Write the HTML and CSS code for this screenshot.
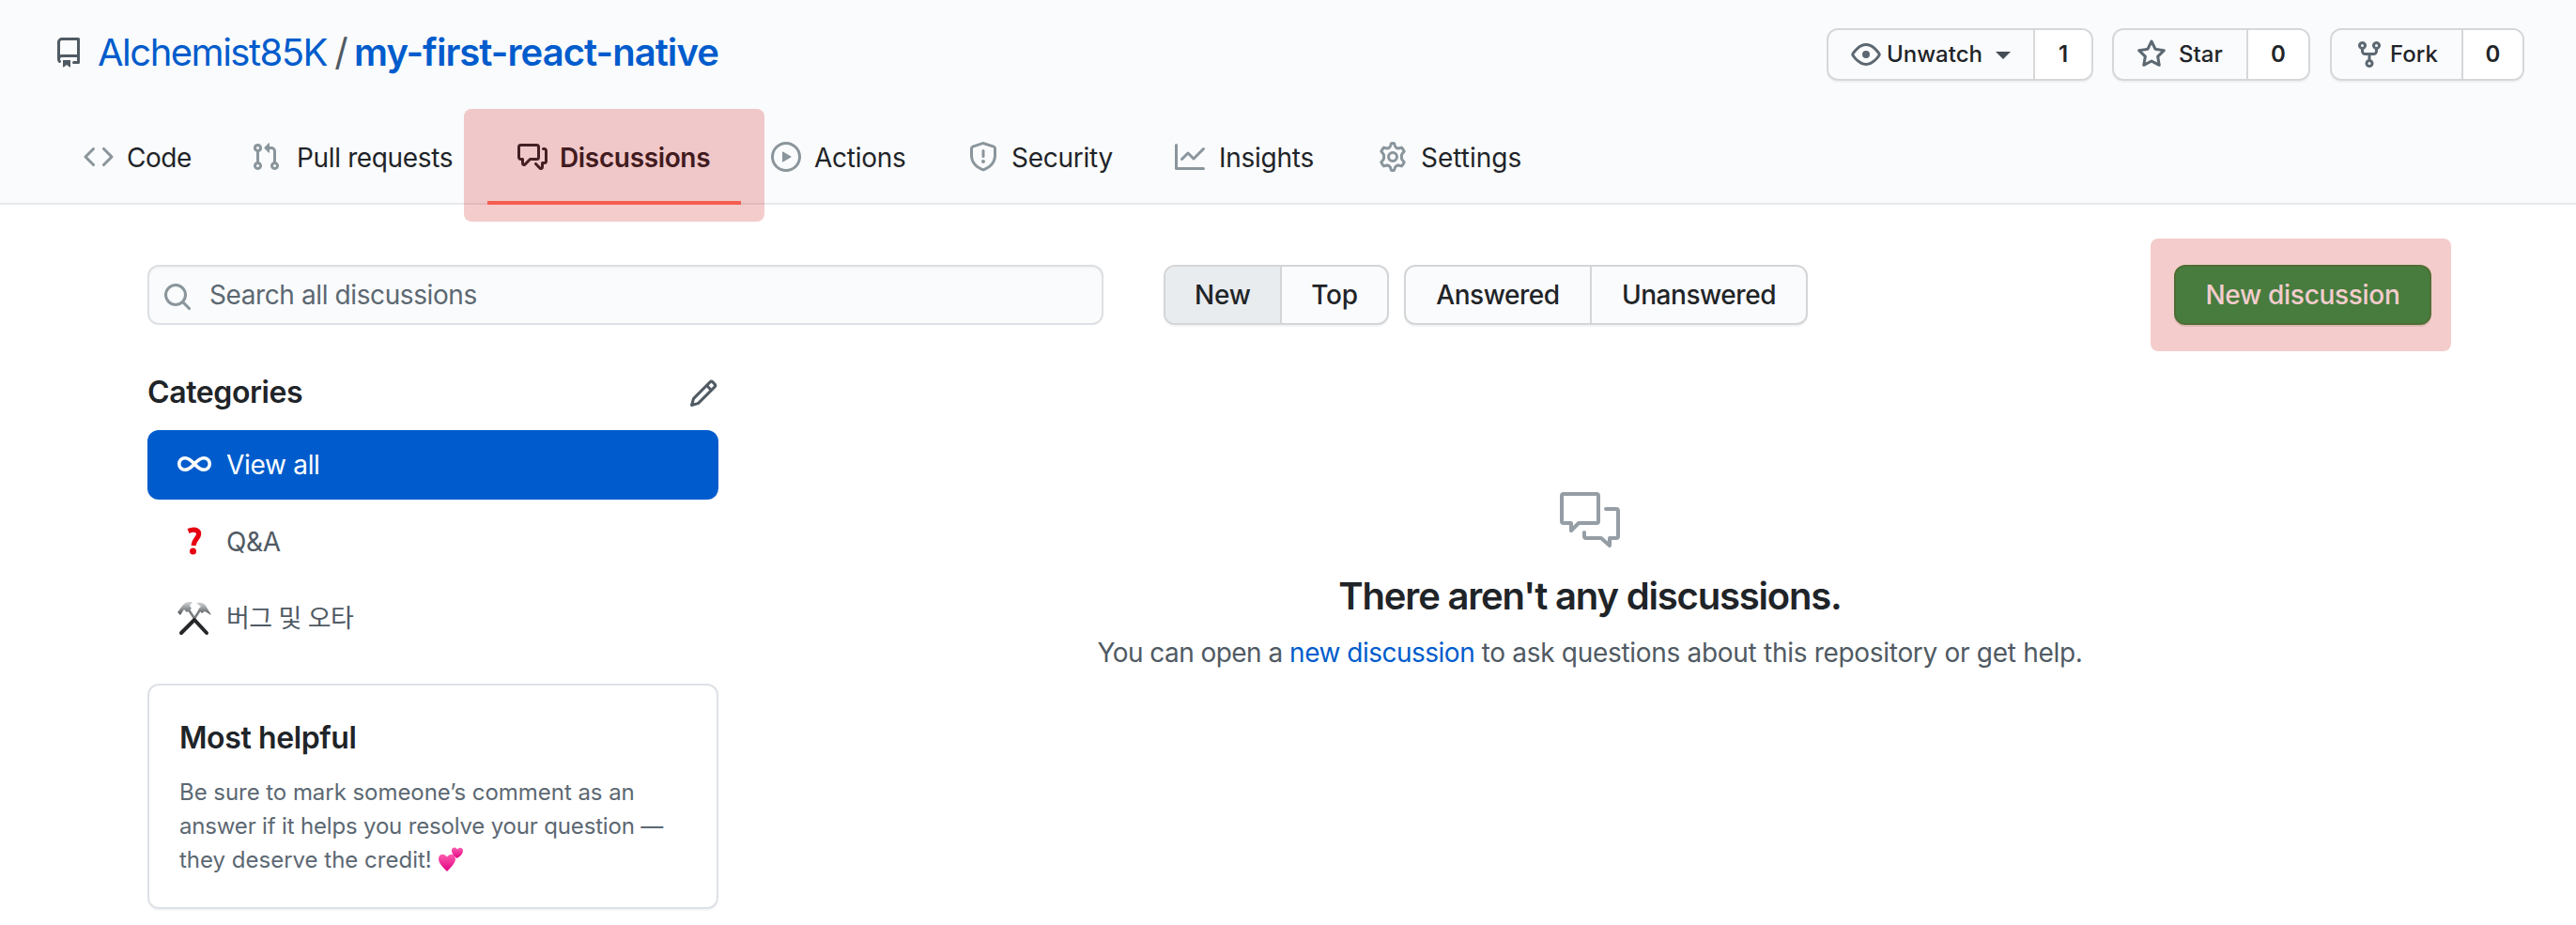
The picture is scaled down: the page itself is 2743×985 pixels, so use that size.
FILE: index.html
```html
<!DOCTYPE html>
<html lang="en">
<head>
<meta charset="utf-8">
<title>Discussions</title>
<link rel="stylesheet" href="styles.css">
</head>
<body>
<header class="header">
  <div class="topbar">
    <svg class="icon repo" viewBox="0 0 16 16"><path fill-rule="evenodd" d="M2 2.5A2.5 2.5 0 014.500 0h8.750a.75.75 0 01.75.75v12.500a.75.75 0 01-.75.75h-2.500a.75.75 0 110-1.500h1.750v-2h-8a1 1 0 00-.714 1.700.75.75 0 01-1.072 1.050A2.495 2.495 0 012 11.500v-9zm10.500-1V9h-8c-.356 0-.694.074-1 .208V2.500a1 1 0 011-1h8zM5 12.250v3.250a.25.25 0 00.4.2l1.450-1.087a.25.25 0 01.3 0L8.600 15.700a.25.25 0 00.4-.2v-3.250a.25.25 0 00-.25-.25h-3.500a.25.25 0 00-.25.25z"/></svg>
    <h1 class="title"><a class="owner">Alchemist85K</a><span class="slash">/</span><a class="name">my-first-react-native</a></h1>
    <div class="social watch"><span class="act"><svg class="icon" viewBox="0 0 16 16"><path fill-rule="evenodd" d="M1.679 7.932c.412-.621 1.242-1.750 2.366-2.717C5.175 4.242 6.527 3.500 8 3.500c1.473 0 2.824.742 3.955 1.715 1.124.967 1.954 2.096 2.366 2.717a.119.119 0 010 .136c-.412.621-1.242 1.750-2.366 2.717C10.825 11.758 9.473 12.500 8 12.500c-1.473 0-2.824-.742-3.955-1.715C2.920 9.818 2.090 8.690 1.679 8.068a.119.119 0 010-.136zM8 2c-1.981 0-3.670.992-4.933 2.078C1.797 5.169.88 6.423.43 7.100a1.619 1.619 0 000 1.798c.45.678 1.367 1.932 2.637 3.024C4.329 13.008 6.019 14 8 14c1.981 0 3.670-.992 4.933-2.078 1.270-1.091 2.187-2.345 2.637-3.023a1.619 1.619 0 000-1.798c-.45-.678-1.367-1.932-2.637-3.023C11.671 2.992 9.981 2 8 2zm0 8a2 2 0 100-4 2 2 0 000 4z"/></svg><b>Unwatch</b><i class="caret"></i></span><span class="count">1</span></div>
    <div class="social star"><span class="act"><svg class="icon" viewBox="0 0 16 16"><path fill-rule="evenodd" d="M8 .25a.75.75 0 01.673.418l1.882 3.815 4.210.612a.75.75 0 01.416 1.279l-3.046 2.970.719 4.192a.75.75 0 01-1.088.791L8 12.347l-3.766 1.980a.75.75 0 01-1.088-.79l.72-4.194L.818 6.374a.75.75 0 01.416-1.280l4.210-.611L7.327.668A.75.75 0 018 .25zm0 2.445L6.615 5.500a.75.75 0 01-.564.410l-3.097.450 2.240 2.184a.75.75 0 01.216.664l-.528 3.084 2.769-1.456a.75.75 0 01.698 0l2.770 1.456-.530-3.084a.75.75 0 01.216-.664l2.240-2.183-3.096-.450a.75.75 0 01-.564-.410L8 2.694z"/></svg><b>Star</b></span><span class="count">0</span></div>
    <div class="social fork"><span class="act"><svg class="icon" viewBox="0 0 16 16"><path fill-rule="evenodd" d="M5 3.250a.75.75 0 11-1.500 0 .75.75 0 011.500 0zm0 2.122a2.250 2.250 0 10-1.500 0v.878A2.250 2.250 0 005.750 8.500h1.500v2.128a2.251 2.251 0 101.500 0V8.500h1.500a2.250 2.250 0 002.250-2.250v-.878a2.250 2.250 0 10-1.500 0v.878a.75.75 0 01-.75.75h-4.500A.75.75 0 015 6.250v-.878zm3.750 7.378a.75.75 0 11-1.500 0 .75.75 0 011.500 0zm3-8.750a.75.75 0 100-1.500.75.75 0 000 1.500z"/></svg><b>Fork</b></span><span class="count">0</span></div>
  </div>
  <nav class="nav">
    <a class="tab code"><svg class="icon" viewBox="0 0 16 16"><path fill-rule="evenodd" d="M4.720 3.220a.75.75 0 011.060 1.060L2.060 8l3.720 3.720a.75.75 0 11-1.060 1.060L.47 8.530a.75.75 0 010-1.060l4.250-4.250zm6.560 0a.75.75 0 10-1.060 1.060L13.940 8l-3.720 3.720a.75.75 0 101.060 1.060l4.250-4.250a.75.75 0 000-1.060l-4.250-4.250z"/></svg><span>Code</span></a>
    <a class="tab pulls"><svg class="icon" viewBox="0 0 16 16"><path fill-rule="evenodd" d="M7.177 3.073L9.573.677A.25.25 0 0110 .854v4.792a.25.25 0 01-.427.177L7.177 3.427a.25.25 0 010-.354zM3.750 2.500a.75.75 0 100 1.500.75.75 0 000-1.500zm-2.250.75a2.250 2.250 0 113 2.122v5.256a2.251 2.251 0 11-1.500 0V5.372A2.250 2.250 0 011.500 3.250zM11 2.500h-1V4h1a1 1 0 011 1v5.628a2.251 2.251 0 101.500 0V5A2.500 2.500 0 0011 2.500zm1 10.250a.75.75 0 111.500 0 .75.75 0 01-1.500 0zM3.750 12a.75.75 0 100 1.500.75.75 0 000-1.500z"/></svg><span>Pull requests</span></a>
    <a class="tab discussions"><svg class="icon" viewBox="0 0 16 16"><path fill-rule="evenodd" d="M1.500 2.750a.25.25 0 01.25-.25h8.500a.25.25 0 01.25.25v5.500a.25.25 0 01-.25.25h-3.500a.75.75 0 00-.53.22L3.500 11.440V9.250a.75.75 0 00-.75-.75h-1a.25.25 0 01-.25-.25v-5.500zM1.750 1A1.750 1.750 0 000 2.750v5.500C0 9.216.784 10 1.750 10H2v1.543a1.457 1.457 0 002.487 1.030L7.061 10h3.189A1.750 1.750 0 0012 8.250v-5.500A1.750 1.750 0 0010.250 1h-8.500zM14.500 4.750a.25.25 0 00-.25-.25h-.5a.75.75 0 110-1.500h.5c.966 0 1.750.784 1.750 1.750v5.500A1.750 1.750 0 0114.250 12H14v1.543a1.457 1.457 0 01-2.487 1.030L9.220 12.280a.75.75 0 111.060-1.060l2.220 2.220v-2.190a.75.75 0 01.75-.75h1a.25.25 0 00.25-.25v-5.500z"/></svg><span>Discussions</span></a>
    <a class="tab actions"><svg class="icon" viewBox="0 0 16 16"><path fill-rule="evenodd" d="M1.500 8a6.500 6.500 0 1113 0 6.500 6.500 0 01-13 0zM8 0a8 8 0 100 16A8 8 0 008 0zM6.379 5.227A.25.25 0 006 5.442v5.117a.25.25 0 00.379.214l4.264-2.559a.25.25 0 000-.428L6.379 5.227z"/></svg><span>Actions</span></a>
    <a class="tab security"><svg class="icon" viewBox="0 0 16 16"><path fill-rule="evenodd" d="M7.467.133a1.750 1.750 0 011.066 0l5.250 1.680A1.750 1.750 0 0115 3.480V7c0 1.566-.32 3.182-1.303 4.682-.983 1.498-2.585 2.813-5.032 3.855a1.700 1.700 0 01-1.330 0c-2.447-1.042-4.049-2.357-5.032-3.855C1.320 10.182 1 8.566 1 7V3.480a1.750 1.750 0 011.217-1.667l5.250-1.680zm.61 1.429a.25.25 0 00-.153 0l-5.250 1.680a.25.25 0 00-.174.238V7c0 1.358.275 2.666 1.057 3.860.784 1.194 2.121 2.340 4.366 3.297a.2.2 0 00.154 0c2.245-.956 3.582-2.104 4.366-3.298C13.225 9.666 13.500 8.360 13.500 7V3.480a.25.25 0 00-.174-.237l-5.250-1.680zM9 10.500a1 1 0 11-2 0 1 1 0 012 0zm-.25-5.750a.75.75 0 10-1.500 0v3a.75.75 0 001.500 0v-3z"/></svg><span>Security</span></a>
    <a class="tab insights"><svg class="icon" viewBox="0 0 16 16"><path fill-rule="evenodd" d="M1.500 1.750a.75.75 0 00-1.500 0v12.500c0 .414.336.75.75.75h14.500a.75.75 0 000-1.500H1.500V1.750zm14.280 2.530a.75.75 0 00-1.060-1.060L10 7.940 7.530 5.470a.75.75 0 00-1.060 0L3.220 8.720a.75.75 0 001.060 1.060L7 7.060l2.470 2.470a.75.75 0 001.060 0l5.250-5.250z"/></svg><span>Insights</span></a>
    <a class="tab settings"><svg class="icon" viewBox="0 0 16 16"><g fill="none" stroke="currentColor" stroke-width="1.500" stroke-linejoin="round"><path d="M7.200 .85Q8 .7 8.800 .85Q9.200 2.700 9.700 3Q10.500 3.600 11.100 3.500L12.700 3.050Q13.600 4 14.100 5.100Q12.700 6.600 12.700 7.200V8.800Q12.700 9.400 14.100 10.900Q13.600 12 12.700 12.950L11.100 12.500Q10.500 12.400 9.700 13Q9.200 13.300 8.800 15.150Q8 15.300 7.200 15.150Q6.800 13.300 6.300 13Q5.500 12.400 4.900 12.500L3.300 12.950Q2.400 12 1.900 10.900Q3.300 9.400 3.300 8.800V7.200Q3.300 6.600 1.900 5.100Q2.400 4 3.300 3.050L4.900 3.500Q5.500 3.600 6.300 3Q6.800 2.700 7.200 .85Z"/><circle cx="8" cy="8" r="2.250"/></g></svg><span>Settings</span></a>
    <div class="highlight tab-highlight"></div>
  </nav>
</header>
<main class="main">
  <div class="tools">
    <div class="search"><svg class="icon" viewBox="0 0 16 16"><path fill-rule="evenodd" d="M11.500 7a4.499 4.499 0 11-8.998 0A4.499 4.499 0 0111.500 7zm-.82 4.740a6 6 0 111.060-1.060l3.040 3.040a.75.75 0 11-1.060 1.060l-3.040-3.040z"/></svg><span>Search all discussions</span></div>
    <div class="group sort"><span class="selected">New</span><span>Top</span></div>
    <div class="group answers"><span>Answered</span><span>Unanswered</span></div>
    <div class="new-wrap"><span class="new-btn">New discussion</span><div class="highlight"></div></div>
  </div>
  <div class="columns">
    <aside class="side">
      <div class="side-head"><h2>Categories</h2><svg class="icon" viewBox="0 0 16 16"><path fill-rule="evenodd" d="M11.013 1.427a1.750 1.750 0 012.474 0l1.086 1.086a1.750 1.750 0 010 2.474l-8.610 8.610c-.21.21-.47.364-.756.445l-3.251.93a.75.75 0 01-.927-.928l.929-3.250a1.750 1.750 0 01.445-.758l8.610-8.610zm1.414 1.060a.25.25 0 00-.354 0L10.811 3.750l1.439 1.440 1.263-1.263a.25.25 0 000-.354l-1.086-1.086zM11.189 6.250L9.750 4.810l-6.286 6.287a.25.25 0 00-.064.108l-.558 1.953 1.953-.558a.249.249 0 00.108-.064l6.286-6.286z"/></svg></div>
      <a class="cat active"><svg class="cat-icon" viewBox="0 0 38 38"><path fill="none" stroke="#fff" stroke-width="3.600" d="M19 19C15 14.500 12.500 12.700 9 12.700A6.300 6.300 0 009 25.300C12.500 25.300 15 23.500 19 19S25.500 12.700 29 12.700A6.300 6.300 0 0129 25.300C25.500 25.300 23 23.500 19 19Z"/></svg><span>View all</span></a>
      <a class="cat"><svg class="cat-icon" viewBox="0 0 38 38"><path fill="none" stroke="#e60012" stroke-width="5.200" d="M12.500 8.500C20 5.500 25.500 8 23 14C21.500 17 18.500 18.500 18 24"/><circle cx="17.500" cy="30" r="3.500" fill="#e60012"/></svg><span>Q&amp;A</span></a>
      <a class="cat"><svg class="cat-icon" viewBox="0 0 38 38"><defs><linearGradient id="m" x1="0" y1="0" x2="0" y2="1"><stop offset="0" stop-color="#d5d8da"/><stop offset="1" stop-color="#4e5357"/></linearGradient></defs><g fill="none" stroke-linecap="round"><path stroke="#777d81" stroke-width="2.500" d="M12 9L20 21M26 9L18 21"/><path stroke="#252729" stroke-width="4" d="M19 21L5 35M19 21L32 35"/></g><path fill="url(#m)" d="M1 13L7 5Q11 1 17 2L14 6L16 9L11 13L8 10L4 16Z"/><path fill="url(#m)" d="M21 3Q28 1 31 6L37 16L30 12L27 14L23 10L26 7Z"/></svg><span class="ko">버그 및 오타</span></a>
      <section class="card"><h2>Most helpful</h2><p><span class="l1">Be sure to mark someone’s comment as an</span><br><span class="l2">answer if it helps you resolve your question —</span><br><span class="l3">they deserve the credit!</span> <svg class="hearts" viewBox="0 0 28 28"><defs><linearGradient id="h" x1="0" y1="0" x2="0" y2="1"><stop offset="0" stop-color="#ff5db0"/><stop offset="1" stop-color="#e00082"/></linearGradient></defs><path fill="url(#h)" d="M10 27C3 20 1 17 1 13.500C1 8 7 7 10 11.500C13 7 19 8 19 13.500C19 17 16 21 10 27Z"/><path fill="url(#h)" d="M20.500 13C16 9 15 7 15 4.500C15 1 19 .5 21 3.500C23.500 .5 27 2 27 5C27 8 24 11 20.500 13Z"/></svg></p></section>
    </aside>
    <section class="empty">
      <svg class="big" viewBox="0 0 64 60"><g fill="none" stroke="#959da5" stroke-width="4" stroke-linejoin="round" stroke-linecap="round"><path d="M4 2H39Q41 2 41 4V31Q41 33 39 33H20L12 41V33H4Q2 33 2 31V4Q2 2 4 2Z"/><path d="M49 18H60Q62 18 62 20V47Q62 49 60 49H53V57L44 49H28Q26 49 26 47V43"/></g></svg>
      <h2>There aren't any discussions.</h2>
      <p><span class="e1">You can open a</span> <a>new discussion</a> <span class="e2">to ask questions about this repository or get help.</span></p>
    </section>
  </div>
</main>
</body>
</html>
```
FILE: styles.css
```css
* { box-sizing: border-box; }
body { margin: 0; width: 2743px; height: 985px; overflow: hidden; background: #fff; color: #1f2428; font: 28px/42px Inter, "Noto Sans CJK KR", sans-serif; }
h1, h2, p { margin: 0; }
span, b, a { white-space: nowrap; }
.icon { width: 32px; height: 32px; flex: none; fill: currentColor; color: #8a959c; display: block; }
.header { height: 218px; background: #fafbfc; border-bottom: 2px solid #e7e9eb; }
.topbar { height: 116px; display: flex; padding: 30px 55px 0 57px; }
.repo { margin-top: 10px; color: #505a63; }
.title { display: flex; margin: -4px auto 0 15px; font-size: 40px; line-height: 60px; font-weight: 400; color: #505a63; }
.owner, .name { color: #005ccc; }
.owner { width: 246px; letter-spacing: -1.5px; }
.slash { width: 27px; text-align: center; }
.name { font-weight: 600; letter-spacing: -.95px; }
.social { height: 56px; display: flex; margin-left: 21px; border: 2px solid #d5d7d9; border-radius: 12px; box-shadow: 0 2px 0 #f0f1f2; font-size: 24px; line-height: 52px; font-weight: 500; overflow: hidden; }
.act { display: flex; align-items: center; width: 220px; padding-left: 24px; border-right: 2px solid #d5d7d9; }
.act b { font-weight: 500; margin-left: 6px; }
.act .icon { color: #5c6872; }
.watch { width: 284px; }
.watch b { width: 116px; }
.caret { border: 8px solid transparent; border-top-color: #444d56; border-bottom: 0; margin-top: 2px; }
.star { width: 211px; }
.star .act { width: 143px; }
.star b { margin-left: 13px; }
.fork { width: 207px; }
.fork .act { width: 140px; }
.count { flex: 1; text-align: center; background: #fff; font-weight: 600; }
.watch { margin-right: -1px; }
.nav { height: 102px; display: flex; padding-left: 89px; position: relative; }
.tab { display: flex; height: 102px; align-items: center; letter-spacing: -.25px; }
.tab span { margin-left: 14px; padding-top: 2px; }
.code { width: 178px; letter-spacing: -.5px; }
.pulls { width: 252px; letter-spacing: -.35px; }
.pulls span { margin-left: 17px; }
.discussions { width: 270px; padding-left: 32px; margin-right: 32px; font-weight: 600; letter-spacing: -.35px; box-shadow: inset 0 -4px #ff7563; }
.discussions .icon { color: #24292e; }
.discussions span { margin-left: 13px; }
.actions { width: 210px; }
.security { width: 220px; }
.insights { width: 216px; }
.insights span { margin-left: 15px; }
.settings { letter-spacing: 0; }
.highlight { position: absolute; width: 320px; height: 120px; border-radius: 8px; background: rgba(200, 0, 0, .2); }
.tab-highlight { left: 494px; top: 0; }
.main { padding: 64px 0 0 157px; }
.tools { display: flex; height: 64px; }
.search { width: 1018px; height: 64px; margin-right: 64px; display: flex; align-items: center; border: 2px solid #dcdfe3; border-radius: 12px; background: #fafbfc; box-shadow: inset 0 2px 0 #f4f5f6; color: #5c6872; padding-left: 14px; letter-spacing: -.4px; }
.search span { margin-left: 18px; }
.search .icon { margin-top: 4px; }
.group { display: flex; border: 2px solid #d3d5d7; border-radius: 12px; background: #fafbfc; font-weight: 500; line-height: 60px; box-shadow: 0 2px 0 #f4f4f5; overflow: hidden; text-align: center; }
.group span { flex: 1; }
.group span:first-child { flex: none; border-right: 2px solid #d3d5d7; }
.sort { width: 240px; margin-right: 16px; letter-spacing: -.2px; }
.sort .selected { width: 124px; background: #e9ecef; }
.answers { width: 430px; letter-spacing: -.45px; }
.answers span:first-child { width: 198px; }
.new-wrap { position: relative; margin-left: 390px; }
.new-btn { display: block; width: 274px; height: 64px; border: 2px solid #2f8a40; border-radius: 12px; background: #279c4e; box-shadow: 0 2px 0 #e3e5e4; color: #fff; font-weight: 500; letter-spacing: -.3px; line-height: 60px; text-align: center; }
.new-wrap .highlight { left: -25px; top: -28px; }
.columns { display: flex; }
.side { width: 608px; padding-top: 48px; }
.side-head { height: 64px; display: flex; justify-content: space-between; }
.side-head .icon { color: #505a63; margin-top: 9px; }
h2 { font-size: 32px; line-height: 48px; font-weight: 600; letter-spacing: -.4px; }
.cat { height: 74px; margin-bottom: 8px; display: flex; align-items: center; padding-left: 31px; border-radius: 12px; color: #505a63; letter-spacing: -.3px; }
.cat-icon { width: 38px; height: 38px; margin: 0 15px 2px 0; flex: none; }
.ko { font-size: 27px; letter-spacing: -.6px; }
.active { background: #005ccc; color: #fff; }
.card { height: 240px; margin-top: 24px; border: 2px solid #dde1e6; border-radius: 12px; box-shadow: 0 2px 0 #f5f6f7; padding: 32px 32px; }
.cat + .card { margin-top: 32px; }
.card p { margin-top: 16px; font-size: 24px; line-height: 36px; color: #5c6872; }
.l1 { letter-spacing: -.05px; }
.l2 { letter-spacing: -.17px; }
.hearts { width: 28px; height: 28px; vertical-align: -5px; }
.empty { flex: none; width: 1050px; margin-left: 403px; padding-top: 178px; text-align: center; }
.big { display: block; width: 64px; height: 60px; margin: 0 auto; }
.empty h2 { font-size: 40px; line-height: 60px; margin-top: 21px; letter-spacing: -1.18px; }
.empty p { margin-top: 9px; color: #505a63; white-space: nowrap; letter-spacing: -.4px; }
.e1 { letter-spacing: -.55px; }
.e2 { letter-spacing: -.3px; }
.empty a { color: #005ccc; letter-spacing: -.5px; }
```
